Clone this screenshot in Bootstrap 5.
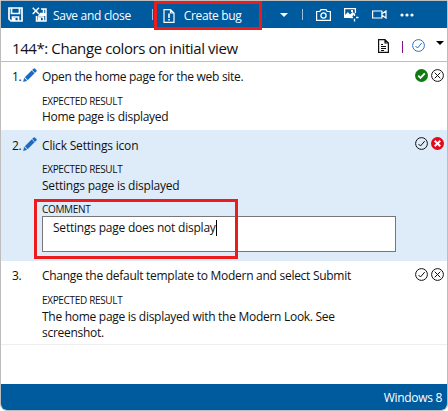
<!DOCTYPE html>
<html lang="en">
<head>
<meta charset="utf-8">
<meta name="viewport" content="width=device-width, initial-scale=1">
<title>Test runner</title>
<link href="https://cdn.jsdelivr.net/npm/bootstrap@5.3.0/dist/css/bootstrap.min.css" rel="stylesheet">
<style>
body{font:12px/17px "Open Sans","Noto Sans",sans-serif;color:#111;background:#fff;overflow:hidden}
.runner{width:448px;height:411px;border:1px solid #bdbdbd;border-radius:0 0 7px 7px;overflow:hidden}
.tools{height:27px;background:#005a9e;color:#fff;padding-left:7px}
.tools svg,.title-bar svg,.marks svg,.num svg{display:block;flex:none}
.save{margin-left:9px}
.save span{margin:2px 0 0 6px;letter-spacing:-.3px}
.sep{width:1px;height:11px;background:#9fc0dc}
.bug{width:108px;height:29px;border:3px solid #ec1c1c;padding-left:6px;margin:2px 0 0 1px;position:relative;z-index:2}
.bug span{margin-left:9px;letter-spacing:-.38px}
.t1{margin-left:21px}
.t2{margin-left:18px}
.t3{margin-left:14px}
.t4{margin-left:13px}
.t5{margin-left:13px}
.t6{margin-left:13px}
.t7{margin-left:13px}
.title-bar{height:34px;border-bottom:1px solid #bdbdbd;padding:2px 3px 0 11px}
.title-bar h1{font-size:15px;line-height:20px;font-weight:400;letter-spacing:-.41px;padding-top:5px}
.doc{margin-right:13px}
.bar{width:1px;height:12px;background:#851086;margin:2px 9px 0 0}
.drop{margin:-6px 0 0 11px}
.step{padding-left:11px;padding-right:3px}
.num{width:30px;flex:none}
.num span{width:11px;letter-spacing:-.3px}
.what{white-space:nowrap;letter-spacing:-.28px}
.cap{font-size:10px;line-height:14px;letter-spacing:-.33px}
.s1{height:68px;padding-top:6px}
.s2{height:131px;padding-top:7px;background:#deebf8}
.s3{height:84px;padding-top:6px;border-bottom:1px solid #eee}
.cap-gap{margin-top:9px}
.s2 .cap-gap{margin-top:8px}
.l3{letter-spacing:-.18px}
.l4,.l5{letter-spacing:-.22px}
.l4{padding-top:1px}
.l7{line-height:16px;padding-top:2px}
.entry{width:354px;height:36px;border:1px solid #777;background:#fff;padding:2px 0 0 10px}
.caret{display:inline-block;width:1px;height:16px;background:#000;vertical-align:-4px}
.callout{position:absolute;left:33px;top:198px;width:204px;height:60px;border:3px solid #ec1c1c}
.marks{gap:3px;margin-left:auto;padding-top:1px}
.s2 .marks{padding-top:0}
.foot{height:26px;background:#005a9e;color:#fff;padding-right:5px;letter-spacing:-.3px}
</style>
<script src="https://cdn.jsdelivr.net/npm/bootstrap@5.3.0/dist/js/bootstrap.bundle.min.js"></script>
</head>
<body>
<svg width="0" height="0" class="position-absolute">
<symbol id="disk" viewBox="0 0 15 15"><path d="M1 1h13v13H3l-2-2zM3.500 1v5.500h8V1M4.500 14v-4h6v4" fill="none" stroke="#fff" stroke-width="1.700"/><path d="M5 11h2.500v3H5z" fill="#fff"/></symbol>
<symbol id="pencil" viewBox="0 0 14 14"><path d="M.3 13.700l1-3.700 2.700 2.700zM2 9.300l6.700-6.700 2.700 2.700L4.700 12zM9.300 2l1.300-1.300q.7-.6 1.400 0l1.300 1.300q.6.700 0 1.400L12 4.700z" fill="#1c6bc0" stroke="#1c6bc0" stroke-width=".3"/></symbol>
<symbol id="ok" viewBox="0 0 13 13"><circle cx="6.500" cy="6.500" r="5.900" fill="none" stroke="currentColor" stroke-width="1"/><path d="M3.500 7l2 2 4.200-4.900" fill="none" stroke="currentColor" stroke-width="1"/></symbol>
<symbol id="no" viewBox="0 0 13 13"><circle cx="6.500" cy="6.500" r="5.900" fill="none" stroke="currentColor" stroke-width="1"/><path d="M3.700 3.700l5.600 5.600m0-5.600L3.700 9.300" fill="none" stroke="currentColor" stroke-width="1"/></symbol>
</svg>
<main class="runner position-relative d-flex flex-column">
<div class="tools d-flex align-items-center flex-shrink-0 text-nowrap">
<svg width="15" height="15"><use href="#disk"/></svg>
<div class="save d-flex align-items-center"><svg width="15" height="15" viewBox="0 0 15 15"><path d="M9 2h5v12H4.500V9M11.500 2v4.500H8M6.500 14v-4h5v4" fill="none" stroke="#fff" stroke-width="1.500"/><path d="M7 11h2v3H7zM8 6h6v3H6z" fill="#fff"/><path d="M.7.700l6.300 6.300M7 .700L.7 7" stroke="#fff" stroke-width="1.500"/></svg><span>Save and close</span></div>
<i class="sep t1"></i>
<div class="bug d-flex align-items-center"><svg width="12" height="14" viewBox="0 0 12 14"><path d="M1 .700h6.500L11 4v9.300H1zM7.500.700V4H11" fill="none" stroke="#fff" stroke-width="1.200"/><path d="M5.200 4.500h1.600V9H5.200zM5.200 10h1.600v1.500H5.200z" fill="#fff"/></svg><span>Create bug</span></div>
<svg class="t2" width="8" height="4"><path d="M0 0h8L4 4z" fill="#fff"/></svg>
<i class="sep t3"></i>
<svg class="t4" width="15" height="12" viewBox="0 0 15 12"><path d="M.6 2.500h3.200L5 .600h5l1.200 1.900h3.200v8.900H.6z" fill="none" stroke="#fff" stroke-width="1.200"/><circle cx="7.500" cy="6.500" r="2.600" fill="none" stroke="#fff" stroke-width="1.300"/></svg>
<svg class="t5" width="15" height="14" viewBox="0 0 15 14"><path d="M7 9.400H.6V.600h10.800V5" fill="none" stroke="#fff" stroke-width="1.300"/><path d="M1 9V7l3-3 2 2.500L8.500 4l2 1.500L8 9zM7 2h2v2H7z" fill="#fff"/><path d="M10.500 5.500V8m0 2.800v2.700M6.500 9.500H9m3 0h2.500" stroke="#fff" stroke-width="1.300"/></svg>
<svg class="t6" width="15" height="9" viewBox="0 0 15 9"><path d="M.6 1h9.300v7H.6zM10 3.700l4-2.700v7l-4-2.700" fill="none" stroke="#fff" stroke-width="1.200"/></svg>
<svg class="t7" width="14" height="4"><circle cx="2" cy="2" r="1.600" fill="#fff"/><circle cx="7" cy="2" r="1.600" fill="#fff"/><circle cx="12" cy="2" r="1.600" fill="#fff"/></svg>
</div>
<div class="title-bar d-flex align-items-center flex-shrink-0 text-nowrap">
<h1 class="m-0 me-auto">144*: Change colors on initial view</h1>
<svg class="doc" width="11" height="14" viewBox="0 0 11 14"><path d="M.6.600H7L10.400 4v9.400H.6zM7 .600V4h3.400M3 5.500h2M3 7.500h5M3 9.500h5M3 11.500h3" fill="none" stroke="#111" stroke-width="1.200"/></svg>
<i class="bar"></i>
<svg width="13" height="13" color="#2b6fc4"><use href="#ok"/></svg>
<svg class="drop" width="8" height="4"><path d="M0 0h8L4 4z" fill="#000"/></svg>
</div>
<section class="step s1 d-flex flex-shrink-0"><div class="num d-flex"><span>1.</span><svg width="14" height="14"><use href="#pencil"/></svg></div>
<div class="what"><div class="l1">Open the home page for the web site.</div><div class="cap cap-gap">EXPECTED RESULT</div><div class="l2">Home page is displayed</div></div>
<div class="marks d-flex"><svg width="13" height="13" viewBox="0 0 13 13"><circle cx="6.500" cy="6.500" r="6.500" fill="#107c10"/><path d="M3.300 6.700l2.200 2.200 4.300-4.500" fill="none" stroke="#fff" stroke-width="1.800"/></svg><svg width="13" height="13"><use href="#no"/></svg></div></section>
<section class="step s2 d-flex flex-shrink-0"><div class="num d-flex"><span>2.</span><svg width="14" height="14"><use href="#pencil"/></svg></div>
<div class="what"><div class="l3">Click Settings icon</div><div class="cap cap-gap">EXPECTED RESULT</div><div class="l4">Settings page is displayed</div><div class="cap cap-gap">COMMENT</div><div class="entry"><span class="l5">Settings page does not display</span><i class="caret"></i></div></div>
<div class="marks d-flex"><svg width="13" height="13"><use href="#ok"/></svg><svg width="13" height="13" viewBox="0 0 13 13"><circle cx="6.500" cy="6.500" r="6.500" fill="#e00b1c"/><path d="M3.700 3.700l5.600 5.600m0-5.600L3.700 9.300" stroke="#fff" stroke-width="2"/></svg></div></section>
<section class="step s3 d-flex flex-shrink-0"><div class="num"><span>3.</span></div>
<div class="what"><div class="l6">Change the default template to Modern and select Submit</div><div class="cap cap-gap">EXPECTED RESULT</div><div class="l7">The home page is displayed with the Modern Look. See<br>screenshot.</div></div>
<div class="marks d-flex"><svg width="13" height="13"><use href="#ok"/></svg><svg width="13" height="13"><use href="#no"/></svg></div></section>
<footer class="foot mt-auto d-flex align-items-center justify-content-end"><span>Windows 8</span></footer>
<div class="callout"></div>
</main>
</body>
</html>
